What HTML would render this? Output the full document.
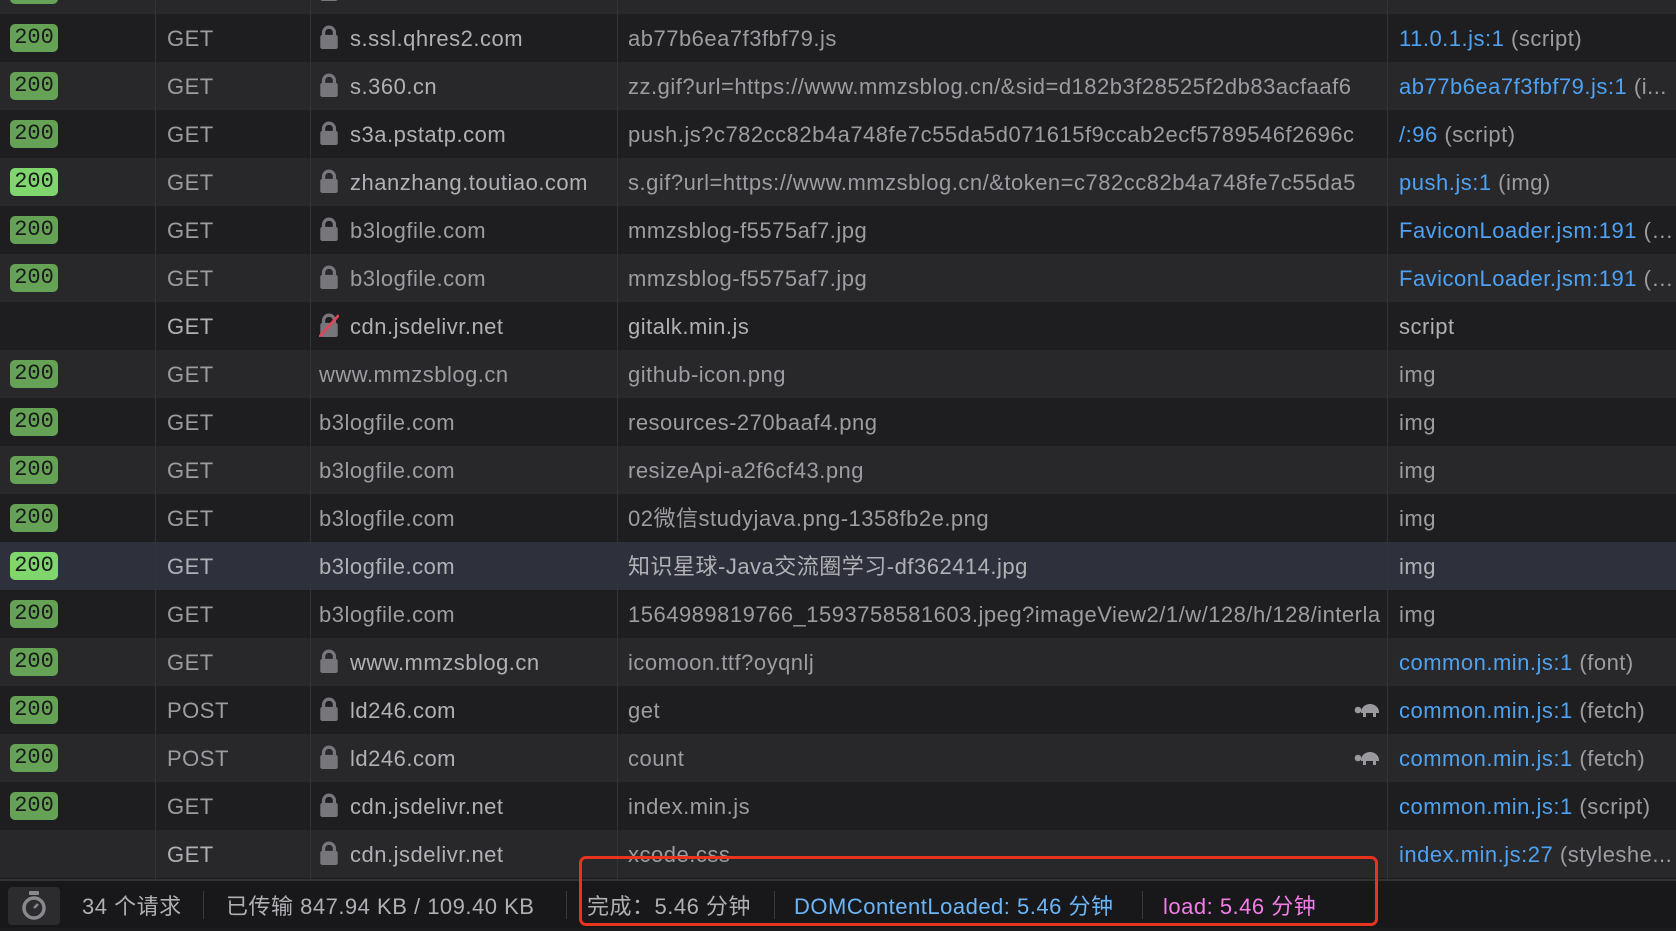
<!DOCTYPE html>
<html><head><meta charset="utf-8"><style>
*{margin:0;padding:0;box-sizing:border-box}
body{width:1676px;height:928px;background:#1c1c1e;overflow:hidden;position:relative;font-family:"Liberation Sans","Noto Sans CJK SC",sans-serif;font-size:22px;letter-spacing:0.5px;color:#9d9da1}
.row{position:absolute;left:0;width:1676px;height:48px;line-height:50px;white-space:nowrap}
.row.d{background:#1e1e20}.row.l{background:#28282b}.row.s{background:#2e313c}
.c{position:absolute;top:0;height:48px;overflow:hidden}
.c1{left:0;width:155px}.c2{left:155px;width:155px;padding-left:12px}
.c3{left:310px;width:307px;padding-left:9px}.c4{left:617px;width:770px;padding-left:11px}
.c5{left:1387px;width:289px;padding-left:12px;text-overflow:ellipsis}
.b{position:absolute;left:10px;top:10px;width:48px;height:28px;border-radius:5px;background:#66a256;color:#1a1a1a;font-family:"Liberation Mono",monospace;font-size:22px;letter-spacing:0;line-height:28px;text-align:center}
.b.br{background:#7fd66d}
.lk{display:inline-block;width:20px;height:24px;vertical-align:-3px;margin-right:11px}
.hl{color:#b1b1b5}
.a{color:#4ea2f2}
.vl{position:absolute;top:0;bottom:48px;width:1px;background:#333336}
.ft{position:absolute;left:0;top:879px;width:1676px;height:49px;background:#18181a;border-top:2px solid #323235}
.ft span{position:absolute;top:3px;line-height:46px}
.sep{position:absolute;top:10px;width:1px;height:28px;background:#3a3a3d}
</style></head><body>
<svg width="0" height="0" style="position:absolute"><defs>
<symbol id="lock" viewBox="0 0 18 22"><path d="M4 10V7a5 5 0 0 1 10 0v3" fill="none" stroke="#77777b" stroke-width="3"/><rect x="1" y="9" width="16" height="13" rx="2" fill="#77777b"/></symbol>
<symbol id="turtle" viewBox="0 0 26 16"><path d="M7 10a9 8 0 0 1 18 0v1H7z" fill="#9a9a9e"/><circle cx="4" cy="8" r="3.3" fill="#9a9a9e"/><rect x="9" y="10" width="3" height="5" fill="#9a9a9e"/><rect x="19" y="10" width="3" height="5" fill="#9a9a9e"/></symbol>
</defs></svg>

<div class="row l" style="top:-34px"><div class="b"></div><div class="c c3"><svg class="lk"><use href="#lock"/></svg></div></div>

<div class="row d" style="top:14px"><div class="c c1"><div class="b">200</div></div><div class="c c2">GET</div><div class="c c3 hl"><svg class="lk"><use href="#lock"/></svg>s.ssl.qhres2.com</div><div class="c c4">ab77b6ea7f3fbf79.js</div><div class="c c5"><span class="a">11.0.1.js:1</span> (script)</div></div>
<div class="row l" style="top:62px"><div class="c c1"><div class="b">200</div></div><div class="c c2">GET</div><div class="c c3 hl"><svg class="lk"><use href="#lock"/></svg>s.360.cn</div><div class="c c4">zz.gif?url=https://www.mmzsblog.cn/&amp;sid=d182b3f28525f2db83acfaaf6</div><div class="c c5"><span class="a">ab77b6ea7f3fbf79.js:1</span> (i...</div></div>
<div class="row d" style="top:110px"><div class="c c1"><div class="b">200</div></div><div class="c c2">GET</div><div class="c c3 hl"><svg class="lk"><use href="#lock"/></svg>s3a.pstatp.com</div><div class="c c4">push.js?c782cc82b4a748fe7c55da5d071615f9ccab2ecf5789546f2696c</div><div class="c c5"><span class="a">/:96</span> (script)</div></div>
<div class="row l" style="top:158px"><div class="c c1"><div class="b br">200</div></div><div class="c c2">GET</div><div class="c c3 hl"><svg class="lk"><use href="#lock"/></svg>zhanzhang.toutiao.com</div><div class="c c4">s.gif?url=https://www.mmzsblog.cn/&amp;token=c782cc82b4a748fe7c55da5</div><div class="c c5"><span class="a">push.js:1</span> (img)</div></div>
<div class="row d" style="top:206px"><div class="c c1"><div class="b">200</div></div><div class="c c2">GET</div><div class="c c3"><svg class="lk"><use href="#lock"/></svg>b3logfile.com</div><div class="c c4">mmzsblog-f5575af7.jpg</div><div class="c c5"><span class="a">FaviconLoader.jsm:191</span> (i...</div></div>
<div class="row l" style="top:254px"><div class="c c1"><div class="b">200</div></div><div class="c c2">GET</div><div class="c c3"><svg class="lk"><use href="#lock"/></svg>b3logfile.com</div><div class="c c4">mmzsblog-f5575af7.jpg</div><div class="c c5"><span class="a">FaviconLoader.jsm:191</span> (i...</div></div>
<div class="row d" style="top:302px"><div class="c c1"></div><div class="c c2 hl">GET</div><div class="c c3 hl"><svg class="lk" viewBox="0 0 18 22"><use href="#lock"/><line x1="0" y1="22" x2="18" y2="2" stroke="#e0445a" stroke-width="2.5"/></svg>cdn.jsdelivr.net</div><div class="c c4 hl">gitalk.min.js</div><div class="c c5 hl">script</div></div>
<div class="row l" style="top:350px"><div class="c c1"><div class="b">200</div></div><div class="c c2">GET</div><div class="c c3">www.mmzsblog.cn</div><div class="c c4">github-icon.png</div><div class="c c5">img</div></div>
<div class="row d" style="top:398px"><div class="c c1"><div class="b">200</div></div><div class="c c2">GET</div><div class="c c3">b3logfile.com</div><div class="c c4">resources-270baaf4.png</div><div class="c c5">img</div></div>
<div class="row l" style="top:446px"><div class="c c1"><div class="b">200</div></div><div class="c c2">GET</div><div class="c c3">b3logfile.com</div><div class="c c4">resizeApi-a2f6cf43.png</div><div class="c c5">img</div></div>
<div class="row d" style="top:494px"><div class="c c1"><div class="b">200</div></div><div class="c c2">GET</div><div class="c c3">b3logfile.com</div><div class="c c4">02微信studyjava.png-1358fb2e.png</div><div class="c c5">img</div></div>
<div class="row s" style="top:542px"><div class="c c1"><div class="b br">200</div></div><div class="c c2 hl">GET</div><div class="c c3 hl">b3logfile.com</div><div class="c c4 hl">知识星球-Java交流圈学习-df362414.jpg</div><div class="c c5 hl">img</div></div>
<div class="row d" style="top:590px"><div class="c c1"><div class="b">200</div></div><div class="c c2">GET</div><div class="c c3">b3logfile.com</div><div class="c c4">1564989819766_1593758581603.jpeg?imageView2/1/w/128/h/128/interla</div><div class="c c5">img</div></div>
<div class="row l" style="top:638px"><div class="c c1"><div class="b">200</div></div><div class="c c2">GET</div><div class="c c3 hl"><svg class="lk"><use href="#lock"/></svg>www.mmzsblog.cn</div><div class="c c4">icomoon.ttf?oyqnlj</div><div class="c c5"><span class="a">common.min.js:1</span> (font)</div></div>
<div class="row d" style="top:686px"><div class="c c1"><div class="b">200</div></div><div class="c c2">POST</div><div class="c c3 hl"><svg class="lk"><use href="#lock"/></svg>ld246.com</div><div class="c c4">get<svg style="position:absolute;left:737px;top:16px" width="26" height="16"><use href="#turtle"/></svg></div><div class="c c5"><span class="a">common.min.js:1</span> (fetch)</div></div>
<div class="row l" style="top:734px"><div class="c c1"><div class="b">200</div></div><div class="c c2">POST</div><div class="c c3 hl"><svg class="lk"><use href="#lock"/></svg>ld246.com</div><div class="c c4">count<svg style="position:absolute;left:737px;top:16px" width="26" height="16"><use href="#turtle"/></svg></div><div class="c c5"><span class="a">common.min.js:1</span> (fetch)</div></div>
<div class="row d" style="top:782px"><div class="c c1"><div class="b">200</div></div><div class="c c2">GET</div><div class="c c3 hl"><svg class="lk"><use href="#lock"/></svg>cdn.jsdelivr.net</div><div class="c c4">index.min.js</div><div class="c c5"><span class="a">common.min.js:1</span> (script)</div></div>
<div class="row l" style="top:830px"><div class="c c1"></div><div class="c c2 hl">GET</div><div class="c c3 hl"><svg class="lk"><use href="#lock"/></svg>cdn.jsdelivr.net</div><div class="c c4">xcode.css</div><div class="c c5"><span class="a">index.min.js:27</span> (styleshe...</div></div>

<div class="vl" style="left:155px"></div><div class="vl" style="left:310px"></div><div class="vl" style="left:617px"></div><div class="vl" style="left:1387px"></div>

<div class="ft">
<div style="position:absolute;left:8px;top:6px;width:52px;height:38px;background:#2c2c2f;border-radius:4px"><svg width="52" height="38"><rect x="21" y="4" width="10" height="4" rx="1" fill="#8a8a8e"/><circle cx="26" cy="21" r="10" fill="none" stroke="#8a8a8e" stroke-width="3.5"/><line x1="26" y1="21" x2="30" y2="17" stroke="#8a8a8e" stroke-width="2.5"/></svg></div>
<span style="left:82px;color:#b0b0b4">34 个请求</span>
<div class="sep" style="left:203px"></div>
<span style="left:226px;color:#b0b0b4">已传输 847.94 KB / 109.40 KB</span>
<div class="sep" style="left:566px"></div>
<span style="left:587px;color:#b0b0b4">完成：5.46 分钟</span>
<div class="sep" style="left:774px"></div>
<span style="left:794px;color:#6cb5f8">DOMContentLoaded: 5.46 分钟</span>
<div class="sep" style="left:1142px"></div>
<span style="left:1163px;color:#f47ce6">load: 5.46 分钟</span>
</div>
<div style="position:absolute;left:579px;top:856px;width:799px;height:70px;border:3px solid #e8341f;border-radius:7px"></div>
</body></html>
